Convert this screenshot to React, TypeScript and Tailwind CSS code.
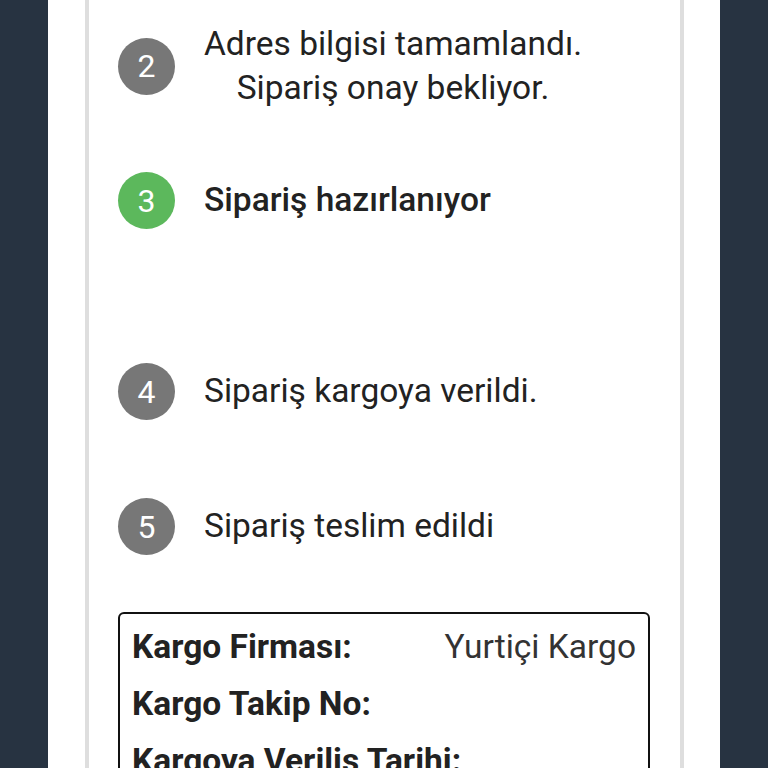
export default function App() {
  const font = { fontFamily: 'Roboto, "Noto Sans", sans-serif' };
  return (
    <div className="flex h-[768px] w-[768px] overflow-hidden bg-[#273341]" style={font}>
      <div className="ml-[48px] h-full w-[672px] bg-white">
        <div className="ml-[37px] mr-[36px] h-full border-x-4 border-[#dedede] pl-[29px] pr-[28px] pt-[22px]">
          {/* Steps */}
          <div className="flex h-[88px] items-center">
            <Circle n={2} />
            <div className="ml-[29px] text-center text-[33.5px] leading-[44px] text-[#222]">
              <div>Adres bilgisi tamamlandı.</div>
              <div>Sipariş onay bekliyor.</div>
            </div>
          </div>
          <Step n={3} label="Sipariş hazırlanıyor" active className="mt-[62px]" />
          <Step n={4} label="Sipariş kargoya verildi." className="mt-[134px]" />
          <Step n={5} label="Sipariş teslim edildi" className="mt-[78px]" />

          {/* Cargo info */}
          <div className="mt-[57px] w-[532px] rounded-md border-2 border-[#111] px-[12px] pt-[5px]">
            <div className="flex h-[57px] items-center justify-between text-[33.5px]">
              <span className="font-bold text-[#222]">Kargo Firması:</span>
              <span className="text-[#333]">Yurtiçi Kargo</span>
            </div>
            <div className="flex h-[57px] items-center text-[33.5px]">
              <span className="font-bold text-[#222]">Kargo Takip No:</span>
            </div>
            <div className="flex h-[57px] items-center text-[33.5px]">
              <span className="whitespace-nowrap font-bold text-[#222]">Kargoya Veriliş Tarihi:</span>
            </div>
          </div>
        </div>
      </div>
    </div>
  );
}

function Circle({ n, active }: { n: number; active?: boolean }) {
  return (
    <div
      className={
        'flex h-[57px] w-[57px] shrink-0 items-center justify-center rounded-full text-[32px] text-white ' +
        (active ? 'bg-[#5cb85c]' : 'bg-[#777777]')
      }
    >
      {n}
    </div>
  );
}

function Step({ n, label, active, className }: { n: number; label: string; active?: boolean; className?: string }) {
  return (
    <div className={'flex h-[57px] items-center ' + (className ?? '')}>
      <Circle n={n} active={active} />
      <div className={'ml-[29px] text-[33.5px] text-[#222] ' + (active ? 'font-medium' : '')}>{label}</div>
    </div>
  );
}
